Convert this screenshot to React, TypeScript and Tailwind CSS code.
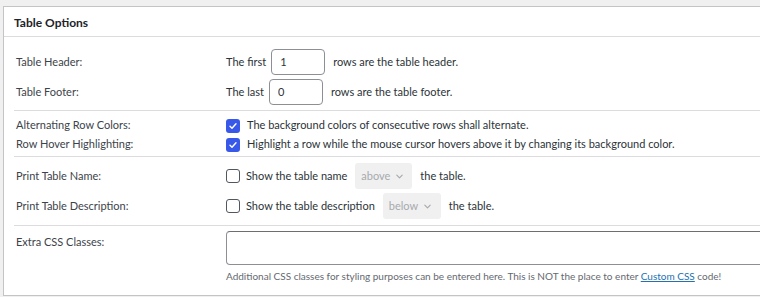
import React from 'react';

const font = { fontFamily: 'Lato, "Liberation Sans", sans-serif' };

function Chevron() {
  return (
    <svg className="w-[9px] h-[9px] text-[#a7aaad]" viewBox="0 0 10 10" fill="none" stroke="currentColor" strokeWidth={1.3}>
      <path d="M2 3.5l3 3 3-3" strokeLinecap="round" strokeLinejoin="round" />
    </svg>
  );
}

function Checkbox({ checked }: { checked: boolean }) {
  if (checked) {
    return (
      <span className="w-[14px] h-[14px] rounded-[3px] bg-[#3858e9] flex items-center justify-center shrink-0">
        <svg className="w-[10px] h-[10px] text-white" viewBox="0 0 10 10" fill="none" stroke="currentColor" strokeWidth={1.4}>
          <path d="M2 5.3l2 2 4-4.6" strokeLinecap="round" strokeLinejoin="round" />
        </svg>
      </span>
    );
  }
  return <span className="w-[14px] h-[14px] rounded-[3px] border border-[#50575e] bg-white shrink-0" />;
}

function Select({ value, width }: { value: string; width: string }) {
  return (
    <span className={`${width} h-[26px] rounded-[3px] bg-[#f0f0f1] flex items-center pl-[6px] gap-[5px] text-[#a7aaad]`}>
      {value}
      <Chevron />
    </span>
  );
}

function Label({ children }: { children: React.ReactNode }) {
  return <div className="w-[212px] shrink-0 pl-[2px] text-[#3c434a]">{children}</div>;
}

export default function App() {
  return (
    <div className="w-[760px] h-[297px] bg-[#f0f0f1] overflow-hidden pt-[6px] pl-[3px]" style={font}>
      <div className="w-[800px] h-[290px] bg-white border border-[#c3c4c7] flex flex-col text-[11px] text-[#2c3338]">
        <div className="h-[30px] border-b border-[#dcdcde] flex items-center pl-[10px] pt-[2px] text-[12px] font-bold text-[#1d2327]">
          Table Options
        </div>

        <div className="ml-[10px] flex flex-col">
          {/* header / footer rows */}
          <div className="pt-[12px] pb-[5px] flex flex-col gap-[4px] border-b border-[#dcdcde]">
            <div className="flex items-center h-[26px]">
              <Label>Table Header:</Label>
              <span>The first</span>
              <span className="ml-[5px] w-[54px] h-[26px] border border-[#8c8f94] rounded-[4px] flex items-center pl-[8px]">1</span>
              <span className="ml-[8px]">rows are the table header.</span>
            </div>
            <div className="flex items-center h-[26px]">
              <Label>Table Footer:</Label>
              <span>The last</span>
              <span className="ml-[5px] w-[54px] h-[26px] border border-[#8c8f94] rounded-[4px] flex items-center pl-[8px]">0</span>
              <span className="ml-[8px]">rows are the table footer.</span>
            </div>
          </div>

          {/* row colors */}
          <div className="pt-[5px] pb-[2px] flex flex-col border-b border-[#dcdcde]">
            <div className="flex items-center h-[19px]">
              <Label>Alternating Row Colors:</Label>
              <Checkbox checked />
              <span className="ml-[7px]">The background colors of consecutive rows shall alternate.</span>
            </div>
            <div className="flex items-center h-[19px]">
              <Label>Row Hover Highlighting:</Label>
              <Checkbox checked />
              <span className="ml-[7px]">Highlight a row while the mouse cursor hovers above it by changing its background color.</span>
            </div>
          </div>

          {/* print name / description */}
          <div className="pt-[6px] pb-[6px] flex flex-col gap-[4px] border-b border-[#dcdcde]">
            <div className="flex items-center h-[26px]">
              <Label>Print Table Name:</Label>
              <Checkbox checked={false} />
              <span className="ml-[6px]">Show the table name</span>
              <span className="ml-[8px]"><Select value="above" width="w-[57px]" /></span>
              <span className="ml-[8px]">the table.</span>
            </div>
            <div className="flex items-center h-[26px]">
              <Label>Print Table Description:</Label>
              <Checkbox checked={false} />
              <span className="ml-[6px]">Show the table description</span>
              <span className="ml-[8px]"><Select value="below" width="w-[58px]" /></span>
              <span className="ml-[8px]">the table.</span>
            </div>
          </div>

          {/* extra css */}
          <div className="pt-[5px] flex">
            <div className="pt-[3px]">
              <Label>Extra CSS Classes:</Label>
            </div>
            <div className="flex flex-col">
              <div className="w-[560px] h-[34px] border border-[#8c8f94] border-t-[#6b6e72] rounded-[4px] bg-white" />
              <div className="mt-[4px] text-[10px] text-[#646970] whitespace-nowrap">
                Additional CSS classes for styling purposes can be entered here. This is NOT the place to enter{' '}
                <span className="text-[#2271b1] underline">Custom CSS</span> code!
              </div>
            </div>
          </div>
        </div>
      </div>
    </div>
  );
}
